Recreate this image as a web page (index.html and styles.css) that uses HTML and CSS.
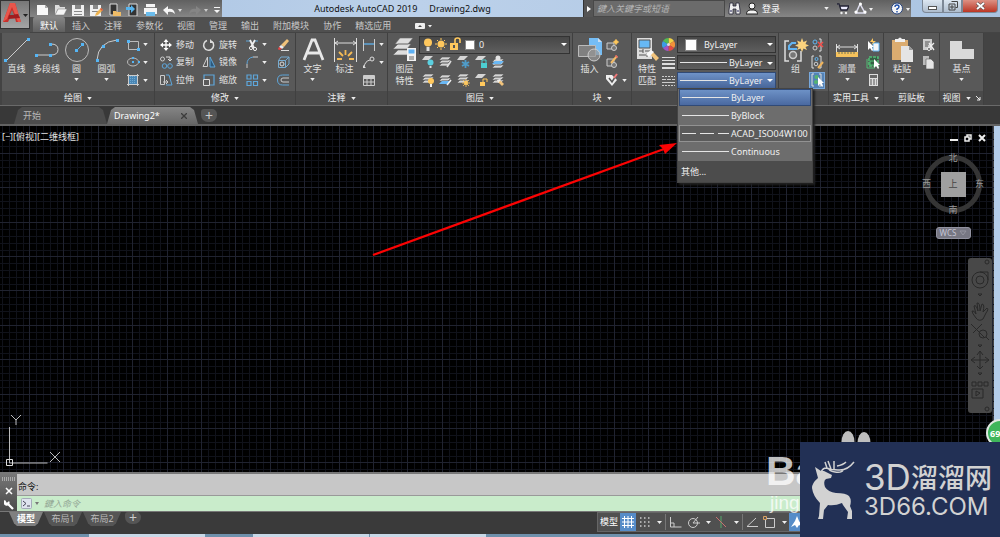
FILE: index.html
```html
<!DOCTYPE html>
<html lang="zh-CN">
<head>
<meta charset="utf-8">
<meta name="viewport" content="width=device-width, initial-scale=1">
<title>Autodesk AutoCAD 2019 - Drawing2.dwg</title>
<link rel="stylesheet" href="styles.css">
</head>
<body>
<svg class="defs" aria-hidden="true">
  <symbol id="down" viewBox="0 0 6 4"><path d="M0 0h6L3 4z" fill="#eee"/></symbol>
  <symbol id="sheets" viewBox="0 0 14 14"><path d="M4 2h9l-3 3H1zM4 5h9l-3 3H1zM4 8h9l-3 3H1z" fill="#d5d5d5" stroke="#555" stroke-width=".6"/></symbol>
  <symbol id="sheet" viewBox="0 0 14 14"><path d="M4 1h8L8 5H1z" fill="#d5d5d5"/></symbol>
</svg>

<header class="head">
  <button class="app" aria-label="应用程序菜单">
    <svg width="28" height="27" viewBox="1 0 28 27"><path d="M3 21L10 2h5l6 19h-5l-1-4-5 0-2 4z" fill="#c9302c"/><path d="M10 2h5l6 19h-3L12 6 7 18l-4 3z" fill="#e8564b"/><path d="M9 14l9-1 2 4-12 1z" fill="#a01c1f"/><path d="M12 9l2 5h-4z" fill="#777"/><path d="M23 13h5l-2.500 3z" fill="#222"/></svg>
  </button>
  <div class="titlebar">
    <div class="qat">
      <button aria-label="新建"><svg width="14" height="14"><path d="M2 3h8l3 3v7H2z" fill="#f8f8f8"/><path d="M10 3v3h3" fill="#aaa"/></svg></button>
      <button aria-label="打开"><svg width="14" height="14"><path d="M2 3h4l1 2h5v2H5l-3 6z" fill="#ddd"/><path d="M5 7h9l-3 6H2z" fill="#f5f5f5" stroke="#777" stroke-width=".5"/></svg></button>
      <button aria-label="保存"><svg width="14" height="14"><path d="M1 3h12v11H1z" fill="#f0f0f0"/><path d="M4 3h6v4H4zM3 9h8v1H3zM3 12h8v1H3z" fill="#888"/></svg></button>
      <button aria-label="另存为"><svg width="14" height="14"><path d="M1 3h11v11H1z" fill="#f0f0f0"/><path d="M4 3h5v4H4zM3 9h7v1H3z" fill="#888"/><path d="M12 6l2 2-5 5-3 1 1-3z" fill="#eeb34f"/><path d="M12 6l2 2-1 1-2-2z" fill="#d54"/></svg></button>
      <button aria-label="从移动设备打开"><svg width="14" height="14"><path d="M3 2h7v11H3z" fill="#333" stroke="#ddd"/><path d="M6 9h3l1 1h4v4H6z" fill="#eebc67"/></svg></button>
      <button aria-label="保存到移动设备"><svg width="14" height="14"><path d="M4 2h8v12H4z" fill="#333" stroke="#ddd"/><path d="M1 5h5V3l4 4-4 4V8H1z" fill="#58b4ec"/></svg></button>
      <button aria-label="打印"><svg width="14" height="14"><path d="M3 2h9v4H3zM1 6h13v6H1z" fill="#f4f4f4"/><path d="M3 10h9v4H3z" fill="#6abcec"/><path d="M3 5h9v1H3z" fill="#888"/></svg></button>
      <button aria-label="放弃"><svg width="22" height="14"><path d="M2 8l5-4v3q6-1 7 5-3-3-7-2v3z" fill="#f5f5f5"/><path d="M17 7h4l-2 3z" fill="#ddd"/></svg></button>
      <button aria-label="重做"><svg width="22" height="14"><path d="M14 8L9 4v3q-6-1-7 5 3-3 7-2v3z" fill="#858585"/><path d="M17 7h4l-2 3z" fill="#ccc"/></svg></button>
      <button aria-label="自定义"><svg width="8" height="14"><path d="M1 5h6v1H1zM1 8h6l-3 3z" fill="#f5f5f5"/></svg></button>
    </div>
    <div class="caption"><span>Autodesk AutoCAD 2019</span><span>Drawing2.dwg</span></div>
    <button class="expand" aria-label="展开"><svg width="4" height="6"><path d="M0 0l4 3-4 3z" fill="#fff"/></svg></button>
    <input class="search" type="text" aria-label="搜索" placeholder="鍵入关鍵字或短语">
    <div class="info">
      <button aria-label="查找"><svg width="13" height="13"><path d="M2 1h3v3h3V1h3l1 7v4H8V7H5v5H1V8z" fill="#eee" stroke="#223" stroke-width=".8"/><path d="M2 9h2M9 9h2" stroke="#225"/></svg></button>
      <button class="login"><svg width="12" height="13"><circle cx="6" cy="4" r="3" fill="#f5f5f5" stroke="#222"/><path d="M0 12q1-4 4-4h4q3 0 4 4z" fill="#f5f5f5" stroke="#222"/></svg>登录</button>
      <button class="push" aria-label="登录菜单"><svg class="dn"><use href="#down"/></svg></button>
      <button aria-label="购物车"><svg width="13" height="13"><path d="M1 2h2l2 6h6l2-4H4" fill="#eef" stroke="#223" stroke-width="1.300"/><circle cx="5.500" cy="11" r="1.200" fill="#eee"/><circle cx="10" cy="11" r="1.200" fill="#eee"/></svg></button>
      <button aria-label="应用商店"><svg width="20" height="13"><path d="M6 2L2 11h9z" fill="none" stroke="#dde" stroke-width="1.500"/><circle cx="6.500" cy="2" r="1.500" fill="#fff"/><circle cx="2" cy="10" r="1.600" fill="#fff"/><circle cx="11" cy="10" r="1.600" fill="#fff"/><path d="M15 6h4l-2 3z" fill="#eee"/></svg></button>
      <button class="help" aria-label="帮助"><svg width="20" height="13"><circle cx="6" cy="6.500" r="5.500" fill="#f5f5f5" stroke="#26437c"/><path d="M4 5q0-2 2-2t2 2q0 1-2 2v1M6 9v1.400" fill="none" stroke="#1b4ca8" stroke-width="1.400"/><path d="M15 6h4l-2 3z" fill="#eee"/></svg></button>
    </div>
    <div class="wincontrols">
      <button class="min" aria-label="最小化"><svg width="9" height="8"><rect x=".5" y="4.500" width="8" height="3" fill="#fff" stroke="#555"/></svg></button>
      <button class="max" aria-label="还原"><svg width="10" height="10"><path d="M3.500.5h6v6h-2M1 3h6v6H1zM3 5h2v2H3z" fill="none" stroke="#444"/></svg></button>
      <button class="cls" aria-label="关闭"><svg width="9" height="8"><path d="M1 1l7 6M8 1L1 7" stroke="#555" stroke-width="3"/><path d="M1 1l7 6M8 1L1 7" stroke="#fff" stroke-width="1.800"/></svg></button>
    </div>
  </div>
  <nav class="menus">
    <button class="on">默认</button><button>插入</button><button>注释</button><button>参数化</button><button>视图</button><button>管理</button><button>输出</button><button>附加模块</button><button>协作</button><button>精选应用</button>
    <button class="fold" aria-label="最小化功能区"><svg width="18" height="8"><rect y="1" width="10" height="6" rx="1" fill="#eee"/><path d="M3 5h4L5 3z" fill="#444"/><path d="M13 3h4l-2 2.500z" fill="#eee"/></svg></button>
  </nav>
</header>

<main class="ribbon">
  <section class="panel p-draw">
    <div class="body">
      <button class="big"><svg width="26" height="26"><path d="M2 24L24 2" stroke="#ccc"/><path d="M0 22h3v3H0zM23 1h3v3h-3z" fill="#55b5f5"/></svg>直线</button>
      <button class="big"><svg width="26" height="26"><path d="M2 18h15q7 0 7-5.500T17 7" fill="none" stroke="#ccc"/><path d="M1 17h3v3H1zM15 17h3v3h-3zM15 6h3v3h-3z" fill="#55b5f5"/></svg>多段线</button>
      <button class="big"><svg width="26" height="26"><circle cx="13" cy="13" r="11.500" fill="none" stroke="#bbb"/><path d="M12 14l6-6" stroke="#55b5f5"/><path d="M11 12h3v3h-3zM17 6h3v3h-3z" fill="#55b5f5"/></svg>圆<svg class="dn"><use href="#down"/></svg></button>
      <button class="big"><svg width="26" height="26"><path d="M3 23Q4 5 23 3" fill="none" stroke="#ccc"/><path d="M2 22h3v3H2zM8 8h3v3H8zM22 2h3v3h-3z" fill="#55b5f5"/></svg>圆弧<svg class="dn"><use href="#down"/></svg></button>
      <div class="smalls">
        <button class="sm" aria-label="矩形"><svg width="14" height="14"><path d="M2.500 3.500h10v8h-10z" fill="none" stroke="#bbb"/><path d="M1 2h3v3H1zM11 10h3v3h-3z" fill="#55b5f5"/></svg><svg class="dn"><use href="#down"/></svg></button>
        <button class="sm" aria-label="椭圆"><svg width="14" height="14"><ellipse cx="7" cy="7" rx="5.500" ry="4" fill="none" stroke="#bbb"/><path d="M6 6h2v2H6zM12 6h2v2h-2zM6 2h2v2H6z" fill="#55b5f5"/></svg><svg class="dn"><use href="#down"/></svg></button>
        <button class="sm" aria-label="图案填充"><svg width="14" height="14"><path d="M3 3h8v8H3z" fill="#4a86b4"/><path d="M4.500 3v8M6.500 3v8M8.500 3v8" stroke="#6fa8d0" stroke-dasharray="1 1"/><path d="M1 2.500h12M1 11.500h12M2.500 1v12M11.500 1v12" stroke="#ccc"/></svg><svg class="dn"><use href="#down"/></svg></button>
      </div>
    </div>
    <button class="name">绘图<svg class="dn"><use href="#down"/></svg></button>
  </section>

  <section class="panel p-modify">
    <div class="body">
      <div class="smalls">
        <button class="sm"><svg width="14" height="14"><path d="M7 2v10M2 7h10" stroke="#fff" stroke-width="1.300"/><path d="M7 1l2.500 3h-5zM7 13l2.500-3h-5zM1 7l3-2.500v5zM13 7l-3-2.500v5z" fill="#fff"/></svg>移动</button>
        <button class="sm"><svg width="14" height="14"><circle cx="3.500" cy="4" r="2" fill="none" stroke="#ccc"/><path d="M7 2h4v4M9 4l2 2 2-2" fill="none" stroke="#ddd"/><circle cx="5.500" cy="11" r="2.300" fill="none" stroke="#5ea6da"/><circle cx="11" cy="11" r="2.300" fill="none" stroke="#5ea6da"/></svg>复制</button>
        <button class="sm"><svg width="14" height="14"><path d="M1.500 2.500h4v9h-4z" fill="none" stroke="#ccc"/><path d="M7 2h3l3 10H7" fill="none" stroke="#5ea6da"/><path d="M4 9h5M7 7l2 2-2 2" fill="none" stroke="#ccc"/></svg>拉伸</button>
      </div>
      <div class="smalls">
        <button class="sm"><svg width="14" height="14"><path d="M10 3.500a5 5 0 1 1-5-1" fill="none" stroke="#ddd" stroke-width="1.500"/><path d="M8 1v4h4z" fill="#ddd"/></svg>旋转</button>
        <button class="sm"><svg width="14" height="14"><path d="M5.500 2v9.500H1z" fill="none" stroke="#ccc"/><path d="M8 2v10h5z" fill="#2d587a" stroke="#5ea6da"/></svg>镜像</button>
        <button class="sm"><svg width="14" height="14"><path d="M2 6V2h10v10H8" fill="none" stroke="#5ea6da" stroke-width="1.200"/><path d="M1.500 6.500h6v6h-6z" fill="none" stroke="#ddd"/></svg>缩放</button>
      </div>
      <div class="smalls">
        <button class="sm" aria-label="修剪"><svg width="14" height="14"><path d="M1 3h4M10 3h3" stroke="#5ea6da"/><path d="M5 2l4 8M10 2L6 9" stroke="#eee" stroke-width="1.800"/><circle cx="6" cy="10" r="1.600" fill="none" stroke="#eee"/><circle cx="10" cy="11" r="1.600" fill="none" stroke="#eee"/></svg><svg class="dn"><use href="#down"/></svg></button>
        <button class="sm" aria-label="圆角"><svg width="14" height="14"><path d="M2 13V9M8 2h5" stroke="#ccc"/><path d="M2 9q0-6 6-7" fill="none" stroke="#5ea6da"/></svg><svg class="dn"><use href="#down"/></svg></button>
        <button class="sm" aria-label="阵列"><svg width="14" height="14"><path d="M2 2h4v4H2zM8.500 2h4v4h-4zM2 8.500h4v4H2zM8.500 8.500h4v4h-4z" fill="none" stroke="#5ea6da" stroke-width="1.200"/></svg><svg class="dn"><use href="#down"/></svg></button>
      </div>
      <div class="smalls">
        <button class="sm" aria-label="删除"><svg width="14" height="14"><path d="M11 1l2 2-5 6-3-2z" fill="#f0c27a"/><path d="M5 7l3 2-2 2-3-2z" fill="#eee"/><path d="M3 9l3 2-3 1-1-1z" fill="#e44"/><path d="M5 12.500h8" stroke="#ddd"/></svg></button>
        <button class="sm" aria-label="分解"><svg width="14" height="14"><path d="M2.500 5.500h7v7h-7zM2.500 5.500L5 2h8L9.500 5.500M13 2v7l-3.500 3.500" fill="none" stroke="#77acd2"/><circle cx="6" cy="9" r="2" fill="none" stroke="#ddd"/></svg></button>
        <button class="sm" aria-label="偏移"><svg width="14" height="14"><path d="M13 2H6.500q-5 0-5 5t5 5H13" fill="none" stroke="#5ea6da"/><path d="M13 5H7q-2 0-2 2t2 2h6" fill="none" stroke="#ccc"/></svg></button>
      </div>
    </div>
    <button class="name">修改<svg class="dn"><use href="#down"/></svg></button>
  </section>

  <section class="panel p-anno">
    <div class="body">
      <button class="big"><svg width="26" height="26"><path d="M4 23L12 3h3l8 20M7 16h12" fill="none" stroke="#e8e8e8" stroke-width="2.800"/></svg>文字<svg class="dn"><use href="#down"/></svg></button>
      <button class="big"><svg width="26" height="26"><path d="M2.500 1v24M24.500 1v24M3 6h21M6 4L3 6l3 2M21 4l3 2-3 2" fill="none" stroke="#ddd"/><path d="M5 22l5 0M22 22h-5M7 15l4 4M20 15l-4 4M13.500 13v5" stroke="#f5bb55" stroke-width="1.800"/></svg>标注</button>
      <div class="smalls">
        <button class="sm" aria-label="线性"><svg width="14" height="14"><path d="M1.500 1v12M12.500 1v12" stroke="#ccc"/><path d="M2 6h10" stroke="#5ea6da" stroke-width="1.500"/></svg><svg class="dn"><use href="#down"/></svg></button>
        <button class="sm" aria-label="引线"><svg width="14" height="14"><path d="M2 12q1-6 6-7" fill="none" stroke="#ddd"/><circle cx="10" cy="4" r="2" fill="none" stroke="#ddd"/><path d="M1 10v3h3z" fill="#ddd"/></svg><svg class="dn"><use href="#down"/></svg></button>
        <button class="sm" aria-label="表格"><svg width="14" height="14"><path d="M1.500 2.500h11v10h-11zM1 5.500h12M1 9h12M5 5v8M9 5v8" fill="none" stroke="#ccc"/><path d="M2 3h10v2H2z" fill="#ccc"/></svg></button>
      </div>
    </div>
    <button class="name">注释<svg class="dn"><use href="#down"/></svg></button>
  </section>

  <section class="panel p-layer">
    <div class="body">
      <button class="big"><svg width="26" height="26"><path d="M8 1h13l-5 6H3zM6 7h13l-4 5H1zM6 13h13l-4 5H1z" fill="#dedede" stroke="#666" stroke-width=".6"/><path d="M15 11h9v13h-9z" fill="#f2f2f2"/><path d="M16.500 12.500h6v4h-6z" fill="#5db1f5"/><path d="M17 20h5M17 22h5" stroke="#666"/></svg><span>图层<br>特性</span></button>
      <div class="layers">
        <div class="combo tall"><svg width="40" height="15"><circle cx="6" cy="5.500" r="4" fill="#ffc85d"/><path d="M4.500 10h3v4h-3z" fill="#ddd"/><circle cx="19" cy="7" r="3.500" fill="#ffc85d"/><path d="M19 1v2M19 11v2M13 7h2M23 7h2M15 3l1 1M22 10l1 1M23 3l-1 1M16 10l-1 1" stroke="#ffc85d"/><path d="M28 6h8v7h-8z" fill="#ffc85d"/><path d="M33 6V3q0-2 2.500-2T38 3v3" fill="none" stroke="#ffc85d" stroke-width="1.600"/><path d="M31 8h2v3h-2z" fill="#555"/></svg><i class="swatch"></i><select aria-label="图层"><option>0</option></select></div>
        <div class="tools">
          <button aria-label="关"><svg width="14" height="14"><use href="#sheet"/><circle cx="9.500" cy="7.500" r="3" fill="#5bd0e0"/><path d="M8.500 11h2v2h-2z" fill="#ddd"/></svg></button>
          <button aria-label="隔离"><svg width="14" height="14"><use href="#sheets"/><path d="M13 6l-4 6" stroke="#ddd" stroke-width="1.500"/></svg></button>
          <button aria-label="冻结"><svg width="14" height="14"><use href="#sheet"/><path d="M9.500 5v8M6 7l7 4M13 7l-7 4" stroke="#4f9cc9" stroke-width="1.800"/></svg></button>
          <button aria-label="锁定"><svg width="14" height="14"><use href="#sheet"/><path d="M7 8h6v5H7z" fill="#4ccfd2"/><path d="M8 8V5h4v3" fill="none" stroke="#4ccfd2"/></svg></button>
          <button aria-label="置为当前"><svg width="14" height="14"><use href="#sheets" y="2"/><path d="M4 6h9l-3 3H1z" fill="#6ab8f4"/><circle cx="7" cy="3" r="2.500" fill="#e5e5e5"/></svg></button>
          <button aria-label="打开所有图层"><svg width="14" height="14"><use href="#sheets" y="-1"/><circle cx="10" cy="8" r="3" fill="#ffc85d"/><path d="M9 11h2v3H9z" fill="#eee"/></svg></button>
          <button aria-label="取消隔离"><svg width="14" height="14"><use href="#sheets"/><path d="M4 8h8l-3 3H1z" fill="#6ab8f4"/><path d="M13 7l-4 5" stroke="#eee" stroke-width="1.500"/></svg></button>
          <button aria-label="解冻"><svg width="14" height="14"><use href="#sheets" y="-1"/><circle cx="10" cy="10" r="2" fill="#ffc85d"/><path d="M10 6v8M6 10h8M7 7l6 6M13 7l-6 6" stroke="#ffc85d" stroke-width=".8"/></svg></button>
          <button aria-label="解锁"><svg width="14" height="14"><use href="#sheet"/><path d="M6 9h5v4H6z" fill="#ffc85d"/><path d="M9 9V6h4v3" fill="none" stroke="#ffc85d"/></svg></button>
          <button aria-label="匹配图层"><svg width="14" height="14"><use href="#sheets" y="-1"/><path d="M6 8l5 5 2-2-4-4z" fill="#f1c37b"/><path d="M6 7l3-1 1 1-3 3z" fill="#eee"/></svg></button>
        </div>
      </div>
    </div>
    <button class="name">图层<svg class="dn"><use href="#down"/></svg></button>
  </section>

  <section class="panel p-block">
    <div class="body">
      <button class="big"><svg width="26" height="26"><path d="M12 1h9l4 4v13H12z" fill="#75bdf5"/><path d="M21 1v4h4" fill="#cde"/><path d="M1.500 8.500h17v11h-17z" fill="#808080" stroke="#bbb"/><circle cx="17" cy="18" r="6" fill="#999" fill-opacity=".7" stroke="#ccc"/></svg>插入</button>
      <div class="smalls">
        <button class="sm" aria-label="创建块"><svg width="14" height="14"><path d="M2 5h7v6H2z" fill="#666" stroke="#ccc"/><circle cx="9" cy="10" r="2.500" fill="#777" stroke="#ccc"/><circle cx="11" cy="4" r="2" fill="#ffc85d"/><path d="M11 1v6M8 4h6" stroke="#ffc85d"/></svg></button>
        <button class="sm" aria-label="编辑块"><svg width="14" height="14"><path d="M2 4h7v7H2z" fill="#666" stroke="#ccc"/><circle cx="9" cy="10" r="2.500" fill="#777" stroke="#ccc"/><path d="M12 1l-6 7" stroke="#f3bb66" stroke-width="2"/><path d="M12 1l-1 1" stroke="#e66" stroke-width="3"/></svg></button>
        <button class="sm" aria-label="编辑属性"><svg width="14" height="14"><path d="M1 2l6 0 5 5-5 6-6-7z" fill="#eee"/><path d="M4 5l3 4 5-8" fill="none" stroke="#555" stroke-width="1.500"/><path d="M12 1L9 5" stroke="#e77" stroke-width="2"/></svg><svg class="dn"><use href="#down"/></svg></button>
      </div>
    </div>
    <button class="name">块<svg class="dn"><use href="#down"/></svg></button>
  </section>

  <section class="panel p-props">
    <div class="body">
      <button class="big"><svg width="26" height="26"><path d="M3 1h15v21H3z" fill="#ddd"/><path d="M5 3h11v8H5z" fill="#66b8f5" stroke="#555"/><path d="M5 14h4M11 14h5M5 18h7M9 12v4M13 16v4" stroke="#555"/><path d="M16 17l6 7 3-3-6-6z" fill="#f1c37b"/><path d="M12 17l5-4 3 2-5 5z" fill="#f7f7f7"/></svg><span>特性<br>匹配</span></button>
      <div class="smalls lines">
        <svg width="13" height="13" role="img" aria-label="颜色"><path d="M6.500 6.500V0A6.500 6.500 0 0 1 12 3z" fill="#f2d245"/><path d="M6.500 6.500L12 3a6.500 6.500 0 0 1 0 7z" fill="#f29139"/><path d="M6.500 6.500L12 10a6.500 6.500 0 0 1-5.500 3z" fill="#e24b41"/><path d="M6.500 6.500V13A6.500 6.500 0 0 1 1 10z" fill="#a254c5"/><path d="M6.500 6.500L1 10a6.500 6.500 0 0 1 0-7z" fill="#3c9be5"/><path d="M6.500 6.500L1 3a6.500 6.500 0 0 1 5.500-3z" fill="#53ba55"/><circle cx="6.500" cy="6.500" r="1.500" fill="#ddd"/></svg>
        <svg width="13" height="13" role="img" aria-label="线宽"><path d="M0 1.500h13M0 4.500h13" stroke="#ddd"/><path d="M0 8h13M0 12h13" stroke="#ddd" stroke-width="2"/></svg>
        <svg width="13" height="13" role="img" aria-label="线型"><path d="M0 2.500h13" stroke="#ccc" stroke-dasharray="2 1"/><path d="M0 5.500h13" stroke="#ccc" stroke-dasharray="4 1"/><path d="M0 8.500h13" stroke="#ccc"/><path d="M0 11.500h13" stroke="#ccc" stroke-dasharray="2 1"/></svg>
      </div>
      <div class="combos">
        <div class="combo tall color"><i class="swatch"></i><select aria-label="对象颜色"><option>ByLayer</option></select></div>
        <div class="combo"><i class="rule"></i><select aria-label="线宽"><option>ByLayer</option></select></div>
        <div class="combo open"><i class="rule"></i><select aria-label="线型"><option>ByLayer</option></select>
          <div class="menu">
            <button class="item sel"><i class="rule"></i>ByLayer</button>
            <button class="item"><i class="rule"></i>ByBlock</button>
            <button class="item hot"><i class="rule dash"></i>ACAD_ISO04W100</button>
            <button class="item"><i class="rule"></i>Continuous</button>
            <button class="other">其他...</button>
          </div>
        </div>
      </div>
    </div>
    <button class="name" aria-label="特性"></button>
  </section>

  <section class="panel p-group">
    <div class="body">
      <button class="big"><svg width="26" height="26"><path d="M6 4H2v20h4M14 24h4V14" fill="none" stroke="#ddd" stroke-width="1.500"/><path d="M14 12H6V9l3-3h4" fill="none" stroke="#63b5f2" stroke-width="2"/><circle cx="10" cy="18" r="3.500" fill="#777" stroke="#ccc" stroke-width="1.500"/><path d="M19 1l1.500 4L24 3.500 22.500 7 26 8.500 22.500 10 24 13l-3.500-1.500L19 15l-1.500-3.500L14 13l1.500-3L12 8.500 15.500 7 14 3.500 17.500 5z" fill="#fbd37e"/></svg>组</button>
      <div class="smalls">
        <button class="sm" aria-label="解除编组"><svg width="14" height="14"><circle cx="5" cy="4" r="2" fill="none" stroke="#61b5f1"/><circle cx="5" cy="10" r="2" fill="none" stroke="#ccc"/><path d="M9 1h2v12H9" fill="none" stroke="#ddd"/><path d="M8 4l5 5M13 4L8 9" stroke="#ef4d49" stroke-width="1.500"/></svg></button>
        <button class="sm" aria-label="组编辑"><svg width="14" height="14"><path d="M4 1H2v12h2M9 1h2v12H9" fill="none" stroke="#ddd"/><circle cx="6.500" cy="4" r="1.500" fill="none" stroke="#61b5f1"/><circle cx="6" cy="9" r="1.800" fill="none" stroke="#ccc"/><path d="M13 7l-5 6" stroke="#f0b45c" stroke-width="2"/></svg></button>
        <button class="sm active" aria-label="启用组选择"><svg width="14" height="14"><path d="M4 1H2v12h2M9 1h2v12H9" fill="none" stroke="#ddd"/><circle cx="6.500" cy="4" r="2" fill="#54b46f"/><circle cx="6" cy="9" r="2" fill="#54b46f"/><path d="M8 4v9l2-2 2 3 1-1-1-3h2z" fill="#fff"/></svg></button>
      </div>
    </div>
    <button class="name" aria-label="组"></button>
  </section>

  <section class="panel p-utils">
    <div class="body">
      <button class="big"><svg width="26" height="26"><path d="M2.500 7v8M23.500 7v8M3 10h20M6 8l-3 2 3 2M20 8l3 2-3 2" fill="none" stroke="#ddd"/><path d="M2 15h22v5H2z" fill="#f6c25c"/><path d="M5 15v2M8 15v2M11 15v2M14 15v2M17 15v2M20 15v2" stroke="#775"/></svg>测量<svg class="dn"><use href="#down"/></svg></button>
      <div class="smalls">
        <button class="sm" aria-label="快速选择"><svg width="14" height="14"><path d="M7 5h6v8H7z" fill="#f5f5f5" stroke="#63b5f2"/><path d="M2 3v9l2-2 2 3 1-1-1-3h2z" fill="#fff"/><path d="M7 0L4 4h3L5 7l5-4H7z" fill="#ffc85d"/></svg></button>
        <button class="sm" aria-label="全部选择"><svg width="14" height="14"><path d="M3 2h9v9H3z" fill="#365f45" stroke="#52bd75" stroke-width="1.500" stroke-dasharray="3 1"/><path d="M1 4v9h8M4 6h5v4H4z" fill="none" stroke="#52bd75"/><path d="M8 4v9l2-2 2 3 1-1-1-3h2z" fill="#fff"/></svg></button>
        <button class="sm" aria-label="快速计算器"><svg width="14" height="14"><path d="M3 1h9v12H3z" fill="#ddd"/><path d="M4 2h7v3H4z" fill="#666"/><path d="M4 7h7M4 9h7M4 11h7" stroke="#555" stroke-dasharray="2 1"/></svg></button>
      </div>
    </div>
    <button class="name">实用工具<svg class="dn"><use href="#down"/></svg></button>
  </section>

  <section class="panel p-clip">
    <div class="body">
      <button class="big"><svg width="26" height="26"><path d="M3 3h16v20H3z" fill="#dbac70"/><path d="M6 5V2h3q2-3 4 0h3v3z" fill="#f0f0f0"/><path d="M12 9h8l4 4v12H12z" fill="#e5e5e5"/><path d="M20 9v4h4" fill="#999"/></svg>粘贴<svg class="dn"><use href="#down"/></svg></button>
      <div class="smalls">
        <button class="sm" aria-label="剪切"><svg width="14" height="14"><path d="M2 1h9v11H2z" fill="#ccc"/><path d="M4 4h5M4 6h4M4 8h3" stroke="#555"/><path d="M7 11l6-6M8 5l5 7" stroke="#eee" stroke-width="1.300"/><circle cx="8" cy="11" r="1.500" fill="#555" stroke="#eee"/></svg></button>
        <button class="sm" aria-label="复制剪裁"><svg width="14" height="14"><path d="M2 1h6v9H2z" fill="#bbb"/><path d="M5 4h5l3 3v7H5z" fill="#e5e5e5" stroke="#555" stroke-width=".6"/></svg></button>
      </div>
    </div>
    <button class="name">剪贴板</button>
  </section>

  <section class="panel p-view">
    <div class="body">
      <button class="big"><svg width="26" height="26"><path d="M1 4h12v8h12v10H1z" fill="#d9d9d9"/></svg>基点<svg class="dn"><use href="#down"/></svg></button>
    </div>
    <button class="name">视图<svg class="dn"><use href="#down"/></svg><svg width="5" height="5"><path d="M0 0l4 4M4 1v3H1" fill="none" stroke="#eee"/></svg></button>
  </section>
</main>

<div class="files">
  <button class="file">开始</button>
  <button class="file cur">Drawing2*<svg width="6" height="6"><path d="M0 0l6 6M6 0L0 6" stroke="#3c3c3c" stroke-width="1.300"/></svg></button>
  <button class="plus" aria-label="新图形">+</button>
</div>

<section class="canvas">
  <svg class="grid" width="100%" height="100%">
    <defs><pattern id="g" x="29" y="130" width="172" height="172" patternUnits="userSpaceOnUse">
      <path fill="none" stroke="#10121a" d="M7.500 0v172m7-172v172m7-172v172m7-172v172m13-172v172m7-172v172m7-172v172m7-172v172m14-172v172m7-172v172m7-172v172m7-172v172m13-172v172m7-172v172m7-172v172m7-172v172m14-172v172m7-172v172m7-172v172m7-172v172"/>
      <path fill="none" stroke="#10121a" d="M0 7.500h172m-172 7h172m-172 7h172m-172 7h172m-172 13h172m-172 7h172m-172 7h172m-172 7h172m-172 14h172m-172 7h172m-172 7h172m-172 7h172m-172 13h172m-172 7h172m-172 7h172m-172 7h172m-172 14h172m-172 7h172m-172 7h172m-172 7h172"/>
      <path fill="none" stroke="#202330" d="M.5 0v172m34-172v172m35-172v172m34-172v172m35-172v172M0 .5h172m-172 34h172m-172 35h172m-172 34h172m-172 35h172"/>
    </pattern></defs>
    <rect width="100%" height="100%" fill="url(#g)"/>
  </svg>
  <div class="viewlabel">[−][俯视][二维线框]</div>
  <svg class="ucs" width="62" height="60"><path d="M9.500 16v36h38" fill="none" stroke="#bbb"/><path d="M6.500 48.500h6v6h-6z" fill="none" stroke="#ddd"/><path d="M11 4l5 5 5-5M16 9v5M50 41l10 10M60 41L50 51" fill="none" stroke="#bbb"/></svg>
  <div class="side">
    <div class="mdi">
      <button aria-label="最小化视图"><svg width="8" height="8"><path d="M0 6h8" stroke="#eee" stroke-width="2"/></svg></button>
      <button aria-label="还原视图"><svg width="8" height="8"><path d="M1 3h4v4H1zM3 3V1h4v4H5" fill="none" stroke="#eee" stroke-width="1.500"/></svg></button>
      <button aria-label="关闭视图"><svg width="8" height="8"><path d="M1 1l6 6M7 1L1 7" stroke="#eee" stroke-width="2"/></svg></button>
    </div>
    <div class="compass"><b class="n">北</b><b class="w">西</b><button class="cube">上</button><b class="e">东</b><b class="s">南</b></div>
    <button class="wcs">WCS <svg width="8" height="6"><path d="M1 1l3 4 3-4z" fill="none" stroke="#94949f"/></svg></button>
    <div class="navbar">
      <svg width="24" height="155" fill="none" stroke="#292929"><circle cx="19" cy="4" r="2"/><circle cx="12" cy="22" r="8"/><circle cx="12" cy="22" r="4"/><path d="M12 14h8v8M10 36h4l-2 2z"/><path d="M8 60q-4-5-4-7 2-1 4 3l-2-8q2-2 4 5l-1-8q3-1 3 8l2-7q3 0 1 8l4-4q2 1-1 5l-3 6q-4 3-7-1zM3 66l13 13M14 66L5 75"/><circle cx="15" cy="76" r="4"/><path d="M18 79l3 3M10 87h4l-2 2zM12 94v17M4 102h16M9 97l3-4 3 4M9 108l3 3 3-3M7 99l-4 3 4 3M17 99l4 3-4 3M10 115h4l-2 2zM4 124h4v4H4zM10 124h4v4h-4zM16 124h4v4h-4zM4 131h11v9H4zM8 133v5l4-3z"/><circle cx="19" cy="151" r="2"/></svg>
    </div>
  </div>
</section>

<section class="command">
  <div class="grip">
    <i class="dots"></i>
    <button aria-label="关闭命令行"><svg width="8" height="8"><path d="M1 1l6 6M7 1L1 7" stroke="#fff" stroke-width="1.500"/></svg></button>
    <button aria-label="自定义命令行"><svg width="10" height="10"><path d="M3 3l6 6" stroke="#fff" stroke-width="2.300"/><path d="M1 0a3 3 0 1 0 4 1L3 3z" fill="#fff"/></svg></button>
  </div>
  <div class="console">
    <div class="history">命令:</div>
    <label class="entry"><svg width="20" height="12"><rect x=".5" y=".5" width="10" height="10" rx="1" fill="#dfe3ee" stroke="#a5abb9"/><path d="M2 3l3 2.500L2 8M6 8h3" fill="none" stroke="#445"/><path d="M14 4h4l-2 3z" fill="#777"/></svg><input type="text" aria-label="命令" placeholder="鍵入命令"></label>
  </div>
</section>

<footer class="status">
  <div class="layouts"><button class="lay cur">模型</button><button class="lay">布局1</button><button class="lay">布局2</button><button class="plus" aria-label="新建布局">+</button></div>
  <div class="toggles">
    <button>模型</button>
    <button class="blue" aria-label="栅格"><svg width="16" height="18"><path d="M2 5.500h12M2 9h12M2 12.500h12M4.500 3v12M8 3v12M11.500 3v12" stroke="#fff"/></svg></button>
    <button aria-label="捕捉"><svg width="29" height="16"><path d="M4 4h10M4 8h10M4 12h10" stroke="#ccc" stroke-width="1.500" stroke-dasharray="1.500 2.500"/><path d="M21 7h5l-2.500 3z" fill="#eee"/></svg></button>
    <button class="sep" aria-label="正交"><svg width="18" height="16"><path d="M2.500 3v10h11M2 9h4v4" fill="none" stroke="#ccc"/></svg></button>
    <button aria-label="极轴追踪"><svg width="28" height="16"><circle cx="7" cy="9" r="4.500" fill="none" stroke="#ccc"/><path d="M7 9l5-6M7 9h7" stroke="#ccc"/><path d="M20 7h5l-2.500 3z" fill="#eee"/></svg></button>
    <button aria-label="等轴测"><svg width="28" height="16"><path d="M7 2v12" stroke="#55a86b"/><path d="M2 3l10 10" stroke="#c87070"/><path d="M20 7h5l-2.500 3z" fill="#eee"/></svg></button>
    <button class="sep" aria-label="对象捕捉追踪"><svg width="17" height="16"><path d="M11 4L2 12.500h11" fill="none" stroke="#ccc"/></svg></button>
    <button aria-label="对象捕捉"><svg width="27" height="16"><path d="M3.500 4.500h9v9h-9z" fill="none" stroke="#ccc"/><path d="M1.500 2.500h3v3h-3z" fill="#555" stroke="#d9a264"/><path d="M20 7h5l-2.500 3z" fill="#eee"/></svg></button>
    <button class="blue" aria-label="注释可见性"><svg width="16" height="18"><path d="M8 3l2 5 4 6-4-2-2 3-2-3-4 2 4-6z" fill="#fff"/></svg></button>
  </div>
</footer>
<div class="taskbar"><i></i><i></i><i></i><i></i></div>

<svg class="arrow" width="308" height="118"><path d="M1 115L292 9" stroke="#fb0303" stroke-width="2.300"/><path d="M305 3l-12 11-2-5-4-4z" fill="#fb0303"/></svg>
<div class="mark"><strong>Ba</strong><span>jing</span></div>
<svg class="paws" width="34" height="28"><ellipse cx="8" cy="12" rx="6.500" ry="11" fill="#bebebe"/><ellipse cx="24" cy="13" rx="6.500" ry="11" fill="#bebebe"/></svg>
<div class="ball">69</div>
<div class="brand">
  <svg width="46" height="60" viewBox="0 0 46 60"><path d="M3 7l6 4 3 0 4 2 4 2-1 3-5 1q-3 2-1 8 3 5 11 6 10 0 13 3 3 4 1 10l2 5 0 8h-5l1-7-5-7-1-2q-7 3-14 2l-4 5-1 9H6l1-3 1-13Q1 36 0 28q0-5 6-10z" fill="#d2d2d2"/><path d="M9 12q2-4 5-4 5 2 12 2 9 1 16-8M15 8l-2-6M19 9l-3-8M22 10V1M17 8q-1 3 6 4t8-2M25 6q6-1 9-4" fill="none" stroke="#d2d2d2" stroke-width="1.500"/></svg>
  <div class="words"><strong><span>3D</span>溜溜网</strong><em>3D66.COM</em></div>
</div>
</body>
</html>
```
FILE: styles.css
```css
* { box-sizing: border-box; }
body {
  margin: 0;
  height: 100vh;
  display: flex;
  flex-direction: column;
  position: relative;
  overflow: hidden;
  background: #3a3a3a;
  color: #e2e2e2;
  font: 9px/12px "Noto Sans", "Noto Sans CJK SC", sans-serif;
}
button, input, select { font: inherit; color: inherit; border: 0; padding: 0; margin: 0; background: none; }
button { display: flex; align-items: center; justify-content: center; white-space: nowrap; }
svg { flex: none; display: block; }
.defs { position: absolute; width: 0; height: 0; }
.dn { width: 5px; height: 3px; }

/* Title bar and ribbon tabs */
.head { display: grid; grid-template: 17px 16px / 30px 1fr; background: #505050; }
.app { grid-row: 1 / 3; height: 29px; background: linear-gradient(#777, #a5a5a5); border: 1px solid #333; }
.titlebar { display: flex; min-width: 0; background: linear-gradient(100deg, #a9c3e2, #bcd1ea 40%, #aac4e2); }
.qat { display: flex; align-items: center; gap: 4px; width: 192px; padding-left: 5px; background: linear-gradient(#606060, #858585); }
.caption { flex: 1; display: flex; justify-content: center; align-items: center; gap: 12px; color: #111; white-space: nowrap; }
.expand { width: 10px; background: #555; border-left: 1px solid #333; }
.search { width: 132px; padding-left: 3px; background: #6b6b6b; border: 1px solid #484848; font-style: italic; }
.search::placeholder { color: #b5b5b5; opacity: 1; }
.info { display: flex; align-items: center; gap: 5px; width: 186px; padding-left: 3px; background: linear-gradient(#606060, #868686); color: #fff; }
.login { gap: 4px; }
.push { margin-left: auto; margin-right: 2px; }
.help { margin-left: 12px; }
.wincontrols { display: flex; align-items: flex-start; width: 89px; padding: 0 2px 0 11px; }
.wincontrols button { height: 13px; border: 1px solid #7d8896; border-top: 0; background: linear-gradient(#dce6f1, #aebccd); }
.wincontrols .min { width: 21px; border-radius: 0 0 0 4px; }
.wincontrols .max { width: 19px; }
.wincontrols .cls { flex: 1; background: linear-gradient(#dd9184, #bb3625); border-radius: 0 0 4px 0; }
.menus { display: flex; padding-left: 3px; border-bottom: 1px solid #444; color: #c8c8c8; }
.menus button { padding: 2px 7px 0; }
.menus .on { background: linear-gradient(#858585, #606060); color: #fff; border-radius: 2px 2px 0 0; }
.menus .fold { margin-left: 10px; }

/* Ribbon panels */
.ribbon { display: flex; padding: 0 2px; height: 73px; background: #434343; border-bottom: 1px solid #6a6a6a; }
.panel { display: flex; flex-direction: column; background: #595959; border-right: 1px solid #404040; }
.body { flex: 1; display: flex; padding: 3px 2px 2px; min-height: 0; }
.name { height: 14px; gap: 5px; background: #4a4a4a; color: #eee; }
.big { flex-direction: column; justify-content: flex-start; width: 29px; line-height: 12px; padding-top: 1px; }
.big .dn { margin-top: 3px; }
.smalls { display: grid; grid-template-rows: repeat(3, 1fr); align-items: center; }
.sm { justify-content: flex-start; gap: 3px; }
.p-draw { width: 153px; }
.p-draw .body { padding-left: 0; gap: 1px; }
.p-draw .smalls { padding-left: 4px; }
.p-modify { width: 141px; }
.p-modify .smalls { width: 43px; padding-left: 2px; }
.p-modify .smalls:nth-child(3) { width: 31px; }
.p-modify .smalls:nth-child(4) { width: 16px; }
.p-anno { width: 92px; }
.p-anno .body { gap: 3px; }
.p-layer { width: 185px; }
.layers { flex: 1; display: grid; grid-template-rows: repeat(3, 1fr); }
.tools { grid-row: 2 / 4; width: 88px; display: grid; grid-template: 1fr 1fr / repeat(5, 1fr); }
.p-block { width: 59px; }
.p-block .smalls { padding-left: 1px; }
.p-props { width: 147px; }
.p-props .big { width: 26px; }
.lines { width: 17px; padding-left: 2px; }
.combos { flex: 1; display: grid; gap: 2px; grid-template-rows: 17px 15px 17px; }
.combo { position: relative; display: flex; align-items: center; min-width: 0; border: 1px solid #333; background: linear-gradient(#474747, #5e5e5e); color: #f0f0f0; }
.combo select { flex: 1; min-width: 0; height: 100%; appearance: none; }
.combo::after { content: ""; position: absolute; right: 2px; top: 6px; border: 3px solid transparent; border-top: 3px solid #fff; border-bottom: 0; pointer-events: none; }
.layers .combo svg { margin: 0 3px 0 2px; }
.swatch { width: 10px; height: 10px; margin-right: 4px; background: #fff; border: 1px solid #888; }
.color .swatch { width: 12px; height: 12px; margin: 0 7px; }
.rule { flex: none; width: 47px; height: 1px; margin: 0 2px; background: #e5e5e5; }
.dash { background: repeating-linear-gradient(90deg, #e5e5e5 0 14px, transparent 14px 18px); }
.open { background: linear-gradient(#6f93c8, #476599); border-color: #314a75; }
.menu { position: absolute; z-index: 5; left: -1px; top: 15px; width: 136px; padding: 0 1px; background: #6d6d6d; border: 1px solid #444; box-shadow: 2px 2px 2px #222; display: flex; flex-direction: column; }
.item { height: 17px; margin-bottom: 1px; justify-content: flex-start; border: 1px solid transparent; }
.sel { background: linear-gradient(#6d91c6, #4a69a0); border-color: #304a77; }
.hot { background: #5b5b5b; border-color: #929292; }
.other { height: 21px; margin: 0 -1px; padding-left: 3px; justify-content: flex-start; background: #4c4c4c; }
.p-group { width: 50px; }
.p-utils { width: 55px; }
.p-utils .big, .p-clip .big { width: 32px; }
.p-group .active { margin: 0 -1px; background: #5482b5; border: 1px solid #78a8dc; height: 17px; }
.p-utils .smalls { padding-left: 3px; }
.p-clip { width: 56px; }
.p-clip .smalls { padding-left: 3px; }
.p-view { width: 44px; }
.p-view .body { justify-content: center; }

/* Drawing tabs */
.files { display: flex; align-items: flex-end; height: 20px; padding-left: 14px; background: #383838; border-bottom: 2px solid #626262; }
.file { width: 93px; height: 17px; justify-content: flex-start; padding-left: 9px; background: #4c4c4c; color: #b8b8b8; clip-path: polygon(0 100%, 4px 3px, 8px 0, calc(100% - 8px) 0, calc(100% - 4px) 3px, 100% 100%); }
.cur.file { width: 91px; justify-content: space-between; padding: 0 11px 0 7px; background: linear-gradient(#858585, #666); color: #fff; }
.plus { width: 16px; height: 13px; margin: 0 0 2px 3px; background: #555; border-radius: 3px 5px 7px 7px; font-size: 14px; color: #ccc; }

/* Drawing area */
.canvas { position: relative; flex: 1; min-height: 0; background: #000; border-right: 6px solid #b4cdea; box-shadow: inset -1px 0 #444; }
.grid { position: absolute; inset: 0; }
.viewlabel { position: absolute; left: 2px; top: 5px; }
.ucs { position: absolute; left: 0; bottom: 1px; }
.side { position: absolute; right: 2px; top: 8px; display: flex; flex-direction: column; align-items: flex-end; }
.mdi { display: flex; gap: 6px; margin-right: 6px; }
.compass { position: relative; width: 58px; height: 58px; margin: 13px 10px 0 0; border: 5px solid #353535; border-radius: 50%; display: grid; place-items: center; }
.compass b { position: absolute; font-weight: 400; color: #999; }
.n { top: -8px; }
.s { bottom: -8px; }
.w { left: -7px; }
.e { right: -7px; }
.cube { width: 25px; height: 25px; background: #9f9f9f; color: #444; }
.wcs { width: 35px; height: 12px; margin: 14px 21px 0 0; background: #777783; border: 1px solid #9292a0; border-radius: 3px; color: #c4c4d4; font-size: 8px; gap: 3px; }
.navbar { margin-top: 19px; background: #484848; border-radius: 3px; }

/* Command line */
.command { display: flex; height: 40px; background: #c7c7c7; border-top: 2px solid #777; border-bottom: 1px solid #777; color: #333; }
.grip { width: 17px; display: flex; flex-direction: column; align-items: center; justify-content: space-between; padding: 3px 0 1px; background: linear-gradient(#777, #4a4a4a); }
.dots { width: 13px; height: 4px; background: repeating-linear-gradient(90deg, #aaa 0 1px, transparent 1px 2px); }
.console { flex: 1; display: flex; flex-direction: column; }
.history { flex: 1; padding: 7px 1px 0; color: #111; }
.entry { display: flex; align-items: center; gap: 3px; height: 16px; padding-left: 4px; background: #c9eccb; border-top: 1px solid #999; }
.entry input { flex: 1; font-style: italic; }
.entry input::placeholder { color: #92a594; opacity: 1; }

/* Layout tabs and status toggles */
.status { display: flex; height: 22px; }
.layouts { display: flex; align-items: flex-start; padding-left: 9px; }
.lay { width: 38px; height: 14px; background: #555; color: #bbb; clip-path: polygon(0 0, 100% 0, calc(100% - 5px) 80%, calc(100% - 8px) 100%, 8px 100%, 5px 80%); margin-right: 1px; }
.lay.cur { width: 34px; background: #808080; color: #fff; font-weight: 700; }
.layouts .plus { margin-left: 3px; height: 12px; }
.toggles { display: flex; align-items: center; height: 20px; margin: 0 194px 0 auto; padding-left: 2px; background: #505050; border: 1px solid #666; color: #fff; }
.toggles > :first-child { margin-right: 2px; }
.sep { border-left: 1px solid #777; padding-left: 2px; }
.blue { background: #568cc8; }
.taskbar { display: flex; height: 3px; background: #6f91ac; padding-left: 89px; gap: 1px; }
.taskbar i { flex: 0 0 116px; background: #c8d9e8; }
.taskbar i:nth-child(2) { flex-basis: 46px; background: #6f91ac; }

/* Overlays */
.arrow { position: absolute; left: 372px; top: 140px; z-index: 6; }
.mark { position: absolute; left: 766px; top: 450px; display: flex; flex-direction: column; color: #fff; opacity: .75; font-family: "Liberation Sans", sans-serif; }
.mark strong { font-size: 41px; line-height: 42px; }
.mark span { padding-left: 4px; font: 19px/22px "Liberation Sans", sans-serif; }
.paws { position: absolute; right: 126px; bottom: 79px; }
.ball { position: absolute; right: -14px; bottom: 90px; width: 28px; height: 28px; padding: 0 0 0 2px; border: 2px solid #e0e8e0; border-radius: 50%; background: #3fb65a; color: #fff; font-weight: 700; line-height: 25px; }
.brand { position: absolute; right: 0; bottom: 0; width: 200px; height: 95px; display: flex; align-items: center; gap: 6px; padding-left: 12px; background: #223055; color: #d2d2d2; }
.words { display: flex; flex-direction: column; }
.words strong { display: flex; align-items: center; font: 500 27px/34px "Noto Sans CJK SC", sans-serif; }
.words strong span { font: 35px/34px Inter, sans-serif; }
.words em { font: 24px/26px Inter, sans-serif; }
```
